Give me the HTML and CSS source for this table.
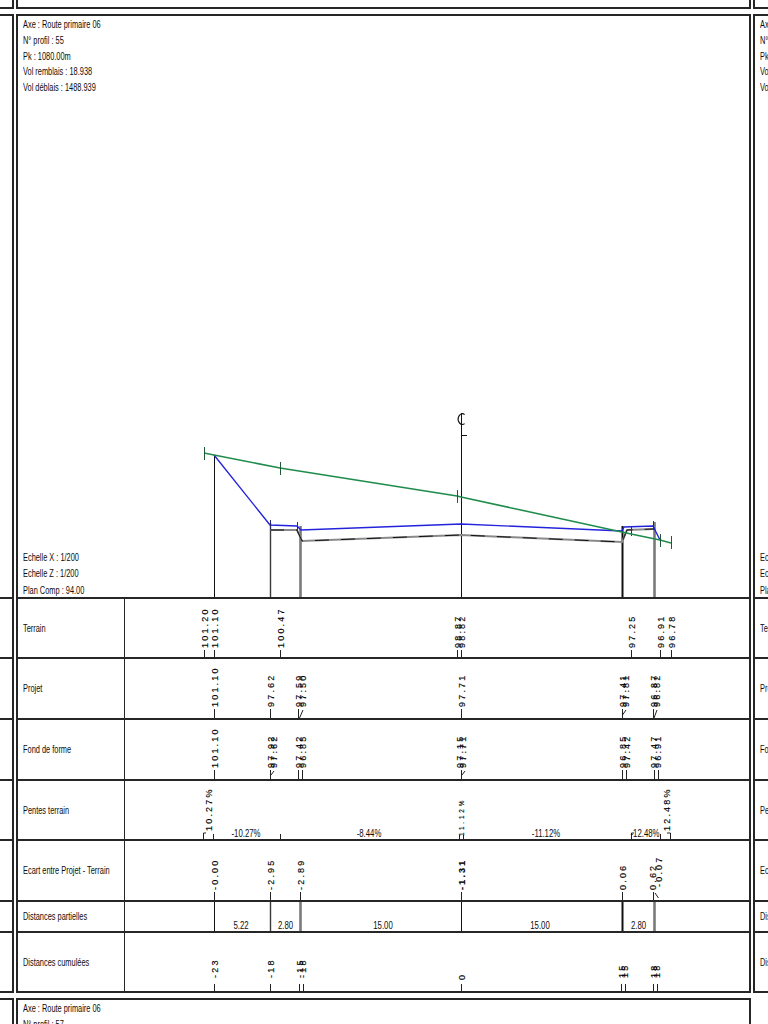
FILE: index.html
```html
<!DOCTYPE html>
<html lang="fr">
<head>
<meta charset="utf-8">
<title>Profil en travers 55</title>
<link rel="stylesheet" href="styles.css">
</head>
<body>
<div class="sheet">
  <div class="pages">
    <section class="page"></section>
    <section class="page"></section>
    <section class="page"></section>

    <!-- page to the left (only its right edge shows) -->
    <section class="page">
      <div class="plot"></div>
      <div class="row r-terrain"><div class="label"></div><div class="cells"></div></div>
      <div class="row r-projet"><div class="label"></div><div class="cells"></div></div>
      <div class="row r-fond"><div class="label"></div><div class="cells"></div></div>
      <div class="row r-pentes"><div class="label"></div><div class="cells"></div></div>
      <div class="row r-ecart"><div class="label"></div><div class="cells"></div></div>
      <div class="row r-part"><div class="label"></div><div class="cells"></div></div>
      <div class="row r-cum"><div class="label"></div><div class="cells"></div></div>
    </section>

    <!-- main profile -->
    <section class="page">
      <div class="plot">
        <div class="info info-top">
          <span>Axe : Route primaire 06</span>
          <span>N° profil : 55</span>
          <span>Pk : 1080.00m</span>
          <span>Vol remblais : 18.938</span>
          <span>Vol déblais : 1488.939</span>
        </div>
        <div class="info info-bottom">
          <span>Echelle X : 1/200</span>
          <span>Echelle Z : 1/200</span>
          <span>Plan Comp : 94.00</span>
        </div>
        <svg class="canvas" width="731" height="581" viewBox="18 16 731 581">
          <path class="ln-k" d="M214.5,455V597M461.5,413V597"/>
          <path class="ln-d" d="M270.5,523V597"/>
          <path class="ln-g" d="M300.5,526V597M654.5,522V597"/>
          <path class="ln-kb" d="M622.5,526V597"/>
          <path class="cl" d="M464.6,414.6A4.1,5.4 0 1 0 464.6,423.6M461.5,435.5H467"/>
          <polyline class="fond" points="270,530 297,530 302,541 461,535 622,542 627,530 653,529"/>
          <polyline class="fond-dash" points="270,530 297,530 302,541 461,535 622,542 627,530 653,529"/>
          <path class="mark" d="M297.5,524V533M623,540L627,530M631.5,526V536"/>
          <polyline class="projet" points="214,455 270,525 297,526 301,530 461,524 622,531 624,527 653,526 660,540"/>
          <path class="projet-tick" d="M270.5,520V529M297.5,522V530M653.5,521V530"/>
          <polyline class="terrain" points="204,453 214,455 280,468 457,496 461,497 631,534 660,540 671,543"/>
          <path class="terrain-tick" d="M204.5,447V460M280.5,462V475M457.5,490V503M660.5,534V547M671.5,536V549"/>
        </svg>
      </div>

      <div class="row r-terrain">
        <div class="label"><span>Terrain</span></div>
        <div class="cells">
          <svg width="624" height="58" viewBox="125 0 624 58">
            <path class="tick" d="M204.5,51V58M214.5,51V58M280.5,51V58M457.5,51V58M461.5,51V58M631.5,51V58M660.5,51V58M671.5,51V58"/>
            <text class="num" transform="translate(204.5 49) rotate(-90)">101.20</text>
            <text class="num" transform="translate(214.5 49) rotate(-90)">101.10</text>
            <text class="num" transform="translate(280.5 49) rotate(-90)">100.47</text>
            <text class="num" transform="translate(457.5 49) rotate(-90)">98.87</text>
            <text class="num" transform="translate(461.5 49) rotate(-90)">98.82</text>
            <text class="num" transform="translate(631.5 49) rotate(-90)">97.25</text>
            <text class="num" transform="translate(660.5 49) rotate(-90)">96.91</text>
            <text class="num" transform="translate(671.5 49) rotate(-90)">96.78</text>
          </svg>
        </div>
      </div>

      <div class="row r-projet">
        <div class="label"><span>Projet</span></div>
        <div class="cells">
          <svg width="624" height="59" viewBox="125 0 624 59">
            <path class="tick" d="M214.5,50V59M270.5,50V59M298.5,50V59M303,51L299.5,59M461.5,50V59M622.5,50V59M626,51L622.5,56M653.5,50V59M657,51L654,59"/>
            <text class="num" transform="translate(214.5 48) rotate(-90)">101.10</text>
            <text class="num" transform="translate(270.5 48) rotate(-90)">97.62</text>
            <text class="num" transform="translate(298.5 48) rotate(-90)">97.59</text>
            <text class="num" transform="translate(302.5 48) rotate(-90)">97.50</text>
            <text class="num" transform="translate(461.5 48) rotate(-90)">97.71</text>
            <text class="num" transform="translate(622.5 48) rotate(-90)">97.41</text>
            <text class="num" transform="translate(625.5 48) rotate(-90)">97.81</text>
            <text class="num" transform="translate(653.5 48) rotate(-90)">96.87</text>
            <text class="num" transform="translate(657 48) rotate(-90)">96.82</text>
          </svg>
        </div>
      </div>

      <div class="row r-fond">
        <div class="label"><span>Fond de forme</span></div>
        <div class="cells">
          <svg width="624" height="59" viewBox="125 0 624 59">
            <path class="tick" d="M214.5,50V59M270.5,50V59M274,51L271,55M298.5,50V59M302.5,50V59M461.5,50V59M465,51L462,55M622.5,50V59M626.5,50V59M654.5,50V59M658.5,50V59"/>
            <text class="num" transform="translate(214.5 48) rotate(-90)">101.10</text>
            <text class="num" transform="translate(270.5 48) rotate(-90)">97.92</text>
            <text class="num" transform="translate(273.5 48) rotate(-90)">97.62</text>
            <text class="num" transform="translate(298.5 48) rotate(-90)">97.42</text>
            <text class="num" transform="translate(302.5 48) rotate(-90)">96.85</text>
            <text class="num" transform="translate(459.5 48) rotate(-90)">97.15</text>
            <text class="num" transform="translate(463 48) rotate(-90)">97.71</text>
            <text class="num" transform="translate(622.5 48) rotate(-90)">96.85</text>
            <text class="num" transform="translate(626.5 48) rotate(-90)">97.42</text>
            <text class="num" transform="translate(654 48) rotate(-90)">97.47</text>
            <text class="num" transform="translate(658 48) rotate(-90)">96.91</text>
          </svg>
        </div>
      </div>

      <div class="row r-pentes">
        <div class="label"><span>Pentes terrain</span></div>
        <div class="cells">
          <svg width="624" height="58" viewBox="125 0 624 58">
            <path class="tick" d="M203.5,52V58M203.5,52H206M213.5,53V58M280.5,53V58M459.5,54V58M463.5,54V58M631.5,52V58M631.5,52H634M660.5,53V58M670.5,52V58M670.5,52H667"/>
            <text class="num" transform="translate(208.5 50) rotate(-90)">10.27%</text>
            <text class="num sm" transform="translate(461.5 55) rotate(-90)">11.12%</text>
            <text class="num" transform="translate(666.5 50) rotate(-90)">12.48%</text>
            <g transform="translate(246 55.5) scale(.78 1)"><text class="hnum">-10.27%</text></g>
            <g transform="translate(369 55.5) scale(.78 1)"><text class="hnum">-8.44%</text></g>
            <g transform="translate(546 55.5) scale(.78 1)"><text class="hnum">-11.12%</text></g>
            <g transform="translate(645 55.5) scale(.78 1)"><text class="hnum">-12.48%</text></g>
          </svg>
        </div>
      </div>

      <div class="row r-ecart">
        <div class="label"><span>Ecart entre Projet - Terrain</span></div>
        <div class="cells">
          <svg width="624" height="59" viewBox="125 0 624 59">
            <path class="tick" d="M214.5,51V59M270.5,51V59M300.5,51V59M461.5,51V59M622.5,51V59M653.5,51V59M655,52L658.5,57"/>
            <text class="num" transform="translate(214.5 49) rotate(-90)">-0.00</text>
            <text class="num" transform="translate(270.5 49) rotate(-90)">-2.95</text>
            <text class="num" transform="translate(300.5 49) rotate(-90)">-2.89</text>
            <text class="num b" transform="translate(461.5 49) rotate(-90)">-1.31</text>
            <text class="num" transform="translate(622.5 49) rotate(-90)">0.06</text>
            <text class="num" transform="translate(653 49) rotate(-90)">0.62</text>
            <text class="num" transform="translate(659 46) rotate(-90)">-0.07</text>
          </svg>
        </div>
      </div>

      <div class="row r-part">
        <div class="label"><span>Distances partielles</span></div>
        <div class="cells">
          <svg width="624" height="29" viewBox="125 0 624 29">
            <path class="ln-k" d="M214.5,0V29M461.5,0V29"/>
            <path class="ln-d" d="M270.5,0V29"/>
            <path class="ln-g" d="M300.5,0V29M654.5,0V29"/>
            <path class="ln-kb" d="M622.5,0V29"/>
            <g transform="translate(241 27) scale(.78 1)"><text class="hnum">5.22</text></g>
            <g transform="translate(285.5 27) scale(.78 1)"><text class="hnum">2.80</text></g>
            <g transform="translate(383 27) scale(.78 1)"><text class="hnum">15.00</text></g>
            <g transform="translate(540 27) scale(.78 1)"><text class="hnum">15.00</text></g>
            <g transform="translate(638.5 27) scale(.78 1)"><text class="hnum">2.80</text></g>
          </svg>
        </div>
      </div>

      <div class="row r-cum">
        <div class="label"><span>Distances cumulées</span></div>
        <div class="cells">
          <svg width="624" height="58" viewBox="125 0 624 58">
            <path class="tick" d="M214.5,51V58M270.5,51V58M299.5,51V58M303.5,51V58M461.5,51V58M621.5,51V58M625.5,51V58M653.5,51V58M657.5,51V58"/>
            <text class="num" transform="translate(214.5 45) rotate(-90)">-23</text>
            <text class="num" transform="translate(270.5 45) rotate(-90)">-18</text>
            <text class="num" transform="translate(299.5 45) rotate(-90)">-15</text>
            <text class="num" transform="translate(303 45) rotate(-90)">-18</text>
            <text class="num" transform="translate(461.5 47) rotate(-90)">0</text>
            <text class="num" transform="translate(621.5 45) rotate(-90)">15</text>
            <text class="num" transform="translate(625 45) rotate(-90)">15</text>
            <text class="num" transform="translate(653.5 45) rotate(-90)">18</text>
            <text class="num" transform="translate(657 45) rotate(-90)">18</text>
          </svg>
        </div>
      </div>
    </section>

    <!-- page to the right (only its left edge shows) -->
    <section class="page">
      <div class="plot">
        <div class="info info-top">
          <span>Axe : Route primaire 06</span>
          <span>N° profil : 56</span>
          <span>Pk : 1100.00m</span>
          <span>Vol remblais : 18.938</span>
          <span>Vol déblais : 1488.939</span>
        </div>
        <div class="info info-bottom">
          <span>Echelle X : 1/200</span>
          <span>Echelle Z : 1/200</span>
          <span>Plan Comp : 94.00</span>
        </div>
      </div>
      <div class="row r-terrain"><div class="label"><span>Terrain</span></div><div class="cells"></div></div>
      <div class="row r-projet"><div class="label"><span>Projet</span></div><div class="cells"></div></div>
      <div class="row r-fond"><div class="label"><span>Fond de forme</span></div><div class="cells"></div></div>
      <div class="row r-pentes"><div class="label"><span>Pentes terrain</span></div><div class="cells"></div></div>
      <div class="row r-ecart"><div class="label"><span>Ecart entre Projet - Terrain</span></div><div class="cells"></div></div>
      <div class="row r-part"><div class="label"><span>Distances partielles</span></div><div class="cells"></div></div>
      <div class="row r-cum"><div class="label"><span>Distances cumulées</span></div><div class="cells"></div></div>
    </section>

    <section class="page"></section>

    <!-- next page below (only its top shows) -->
    <section class="page">
      <div class="plot">
        <div class="info info-top">
          <span>Axe : Route primaire 06</span>
          <span>N° profil : 57</span>
        </div>
      </div>
    </section>

    <div class="empty"></div>
  </div>
</div>
</body>
</html>
```

FILE: styles.css
```css
html, body {
  margin: 0;
  background: #fff;
}

.sheet {
  width: 768px;
  height: 1024px;
  overflow: hidden;
  background: #fff;
}

.pages {
  display: grid;
  grid-template-columns: repeat(3, 735px);
  grid-template-rows: repeat(3, 979px);
  column-gap: 2px;
  row-gap: 5px;
  margin: -970px 0 0 -721px;
}

.page {
  box-sizing: border-box;
  border: 2px solid #262626;
  display: flex;
  flex-direction: column;
  background: #fff;
  font-family: "Liberation Sans", Arial, sans-serif;
  font-size: 10px;
  color: #0d0d0d;
}

.plot {
  flex: none;
  height: 581px;
  display: grid;
}

.plot > * {
  grid-area: 1 / 1;
}

.info {
  padding-left: 5px;
  line-height: 15.8px;
}

.info-top {
  align-self: start;
  padding-top: 1px;
}

.info-bottom {
  align-self: end;
  line-height: 16.5px;
  margin-bottom: -2px;
}

.info span,
.label span {
  display: block;
  white-space: nowrap;
  transform: scaleX(0.74);
  transform-origin: 0 50%;
}

.canvas {
  display: block;
}

.row {
  flex: none;
  box-sizing: border-box;
  border-top: 2px solid #262626;
  display: flex;
}

.r-terrain { height: 60px; }
.r-projet  { height: 61px; }
.r-fond    { height: 61px; }
.r-pentes  { height: 60px; }
.r-ecart   { height: 61px; }
.r-part    { height: 31px; }
.r-cum     { height: 60px; }

.label {
  box-sizing: border-box;
  width: 107px;
  flex: none;
  border-right: 1px solid #262626;
  padding-left: 5px;
  display: flex;
  align-items: center;
}

.cells {
  flex: 1;
  min-width: 0;
}

.cells svg {
  display: block;
}

/* drawing strokes */
.ln-k  { stroke: #111; stroke-width: 1; fill: none; }
.ln-d  { stroke: #3a3a3a; stroke-width: 1.4; fill: none; }
.ln-g  { stroke: #7a7a7a; stroke-width: 2.6; fill: none; }
.ln-kb { stroke: #111; stroke-width: 2; fill: none; }
.cl    { stroke: #111; stroke-width: 1.2; fill: none; }

.terrain      { stroke: #1f8c4c; stroke-width: 1.6; fill: none; }
.terrain-tick { stroke: #1e5a36; stroke-width: 1; fill: none; }
.projet       { stroke: #2323dc; stroke-width: 1.4; fill: none; }
.projet-tick  { stroke: #2a2a6a; stroke-width: 1; fill: none; }
.fond         { stroke: #8a8a8a; stroke-width: 2; fill: none; }
.fond-dash    { stroke: #111; stroke-width: 1; fill: none; stroke-dasharray: 14 12; }
.mark         { stroke: #333; stroke-width: 1; fill: none; }

.tick { stroke: #222; stroke-width: 1; fill: none; }

.num {
  font-family: "Liberation Sans", Arial, sans-serif;
  font-size: 9px;
  letter-spacing: 2.2px;
  fill: #000;
  stroke: #000;
  stroke-width: 0.15px;
  dominant-baseline: central;
}

.num.sm {
  font-size: 6.5px;
  letter-spacing: 2.8px;
}

.num.b {
  font-weight: bold;
}

.hnum {
  font-family: "Liberation Sans", Arial, sans-serif;
  font-size: 10px;
  fill: #0d0d0d;
  text-anchor: middle;
}
```
